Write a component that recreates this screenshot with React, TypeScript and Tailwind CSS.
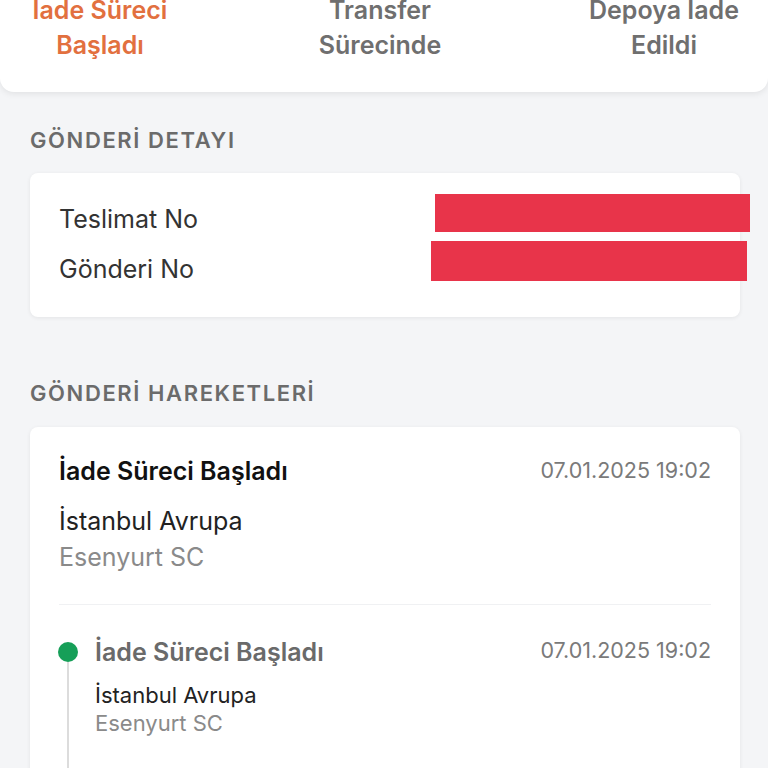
import React from "react";

export default function App() {
  return (
    <div className="min-h-[768px] w-[768px] bg-[#f4f5f7] overflow-hidden" style={{ fontFamily: "Inter, Roboto, 'Liberation Sans', sans-serif" }}>
      {/* top tabs card */}
      <div className="bg-white rounded-b-[14px] shadow-[0_2px_6px_rgba(0,0,0,0.08)] h-[92px] relative overflow-hidden">
        <div className="flex absolute left-0 right-0 top-[-7px]">
          <div className="w-[200px] text-center text-[25px] leading-[35px] font-semibold text-[#e2703f]">
            <div>İade Süreci</div>
            <div>Başladı</div>
          </div>
          <div className="flex-1 text-center text-[25px] leading-[35px] font-semibold text-[#6f6f6f]">
            <div>Transfer</div>
            <div>Sürecinde</div>
          </div>
          <div className="w-[208px] text-center text-[25px] leading-[35px] font-semibold text-[#6f6f6f]">
            <div>Depoya İade</div>
            <div>Edildi</div>
          </div>
        </div>
      </div>

      <div className="px-[30px] pr-[28px]">
        <div className="pt-[33px] text-[22px] leading-[30px] font-semibold tracking-[1.6px] text-[#6b6b6b]">GÖNDERİ DETAYI</div>
        <div className="mt-[18px] bg-white rounded-[8px] shadow-[0_1px_4px_rgba(0,0,0,0.07)] h-[144px] relative">
          <div className="pl-[29px] pt-[21px] text-[25px] text-[#333] leading-[50px]">
            <div>Teslimat No</div>
            <div>Gönderi No</div>
          </div>
          <div className="absolute left-[405px] top-[21px] w-[315px] h-[38px] bg-[#e8344a]" />
          <div className="absolute left-[401px] top-[68px] w-[316px] h-[40px] bg-[#e8344a]" />
        </div>

        <div className="pt-[61px] text-[22px] leading-[30px] font-semibold tracking-[1.6px] text-[#6b6b6b]">GÖNDERİ HAREKETLERİ</div>
        <div className="mt-[19px] bg-white rounded-t-[8px] shadow-[0_1px_4px_rgba(0,0,0,0.07)] h-[400px] px-[29px]">
          <div className="pt-[28px] flex justify-between items-start">
            <div className="text-[25px] leading-[32px] font-semibold text-[#111]">İade Süreci Başladı</div>
            <div className="text-[21.5px] leading-[30px] text-[#7a7a7a]">07.01.2025 19:02</div>
          </div>
          <div className="mt-[16px] text-[25px] leading-[36px] text-[#222]">İstanbul Avrupa</div>
          <div className="text-[25px] leading-[36px] text-[#8a8a8a]">Esenyurt SC</div>
          <div className="mt-[29px] h-[1px] bg-[#f0f1f3]" />
          <div className="flex mt-[30px]">
            <div className="w-[22px] flex flex-col items-center shrink-0 -ml-[2px]">
              <div className="mt-[7px] w-[20px] h-[20px] rounded-full bg-[#169f58]" />
              <div className="w-[2px] h-[200px] bg-[#dcdcdc]" />
            </div>
            <div className="flex-1 pl-[16px]">
              <div className="flex justify-between items-start">
                <div className="text-[25px] leading-[34px] font-semibold text-[#6a6a6a]">İade Süreci Başladı</div>
                <div className="text-[21.5px] leading-[30px] text-[#7a7a7a]">07.01.2025 19:02</div>
              </div>
              <div className="mt-[12px] text-[22px] leading-[28px] text-[#222]">İstanbul Avrupa</div>
              <div className="text-[22px] leading-[28px] text-[#8a8a8a]">Esenyurt SC</div>
            </div>
          </div>
        </div>
      </div>
    </div>
  );
}
